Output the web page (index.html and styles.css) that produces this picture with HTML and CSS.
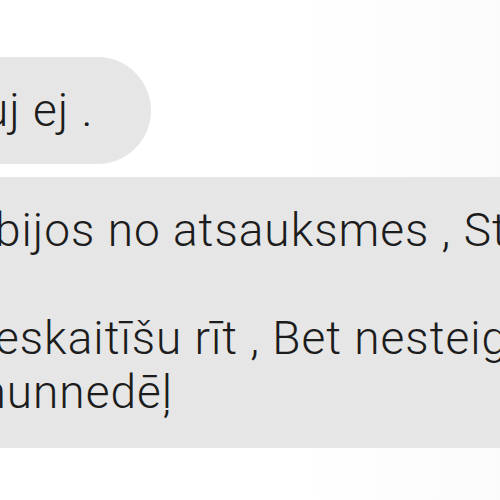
FILE: index.html
```html
<!DOCTYPE html>
<html lang="lv">

<head>
    <meta charset="UTF-8">
    <meta name="viewport" content="width=device-width, initial-scale=1.0">
    <title>Čats</title>
    <link rel="stylesheet" href="styles.css">
</head>

<body>
    <div class="chat">
        <div class="bubble bubble-short">
            <div class="line">uj ej .</div>
        </div>

        <div class="bubble bubble-long">
            <div class="line">bijos no atsauksmes , Stāstīšu</div>
            <div class="line line-empty">&nbsp;</div>
            <div class="line">eskaitīšu rīt , Bet nesteigšos</div>
            <div class="line line-cut">munnedēļ</div>
        </div>
    </div>
</body>

</html>
```

FILE: styles.css
```css
body {
    margin: 0;
    height: 500px;
    overflow: hidden;
    background: linear-gradient(to right, #ffffff 60%, #fbfbfb 100%);
    font-family: "Roboto Light", Roboto, "Noto Sans", sans-serif;
    font-weight: 300;
    color: #1c1c1c;
}

.chat {
    display: flex;
    flex-direction: column;
    align-items: flex-start;
    padding-top: 57px;
}

.bubble {
    background-color: #e6e6e6;
    font-size: 46px;
    line-height: 54px;
    letter-spacing: 1px;
    box-sizing: border-box;
}

.bubble-short {
    height: 107px;
    margin-left: -97px;
    padding: 26px 58px 0 80px;
    border-radius: 54px;
}

.bubble-long {
    width: 800px;
    height: 271px;
    margin-top: 13px;
    margin-left: -95px;
    padding: 26px 40px 0 90px;
    border-radius: 54px;
}

.line {
    white-space: nowrap;
}

.line-cut {
    margin-left: -30px;
}
```
